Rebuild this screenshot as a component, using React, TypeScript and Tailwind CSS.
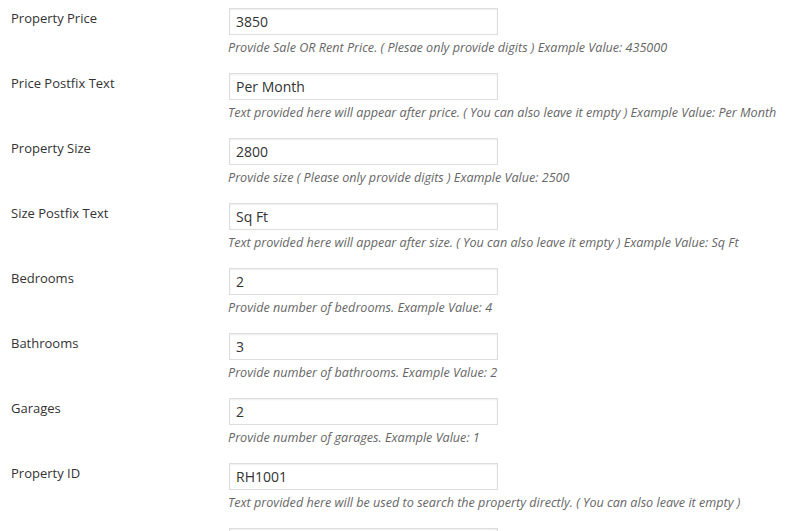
const fields = [
  { label: "Property Price", value: "3850", desc: "Provide Sale OR Rent Price. ( Plesae only provide digits ) Example Value: 435000" },
  { label: "Price Postfix Text", value: "Per Month", desc: "Text provided here will appear after price. ( You can also leave it empty ) Example Value: Per Month" },
  { label: "Property Size", value: "2800", desc: "Provide size ( Please only provide digits ) Example Value: 2500" },
  { label: "Size Postfix Text", value: "Sq Ft", desc: "Text provided here will appear after size. ( You can also leave it empty ) Example Value: Sq Ft" },
  { label: "Bedrooms", value: "2", desc: "Provide number of bedrooms. Example Value: 4" },
  { label: "Bathrooms", value: "3", desc: "Provide number of bathrooms. Example Value: 2" },
  { label: "Garages", value: "2", desc: "Provide number of garages. Example Value: 1" },
  { label: "Property ID", value: "RH1001", desc: "Text provided here will be used to search the property directly. ( You can also leave it empty )" },
  { label: "", value: "", desc: "" },
];

export default function App() {
  return (
    <div className="w-[799px] h-[531px] overflow-hidden bg-white font-['Open_Sans',sans-serif] text-[#444]">
      {fields.map((f, i) => (
        <div key={i} className="flex h-[65px] pt-[8px]">
          <div className="w-[229px] shrink-0 pl-[11px] pt-[1px] text-[13px] leading-[18px] text-[#333]">
            {f.label}
          </div>
          <div className="flex flex-col">
            <input
              readOnly
              value={f.value}
              className="w-[269px] h-[27px] border border-[#dddddd] bg-white px-[6px] text-[14px] text-[#333] shadow-[inset_0_1px_2px_rgba(0,0,0,0.07)] outline-none"
            />
            <p className="mt-[4px] -ml-[1px] text-[12.6px] leading-[17px] italic text-[#666] whitespace-nowrap">{f.desc}</p>
          </div>
        </div>
      ))}
    </div>
  );
}
